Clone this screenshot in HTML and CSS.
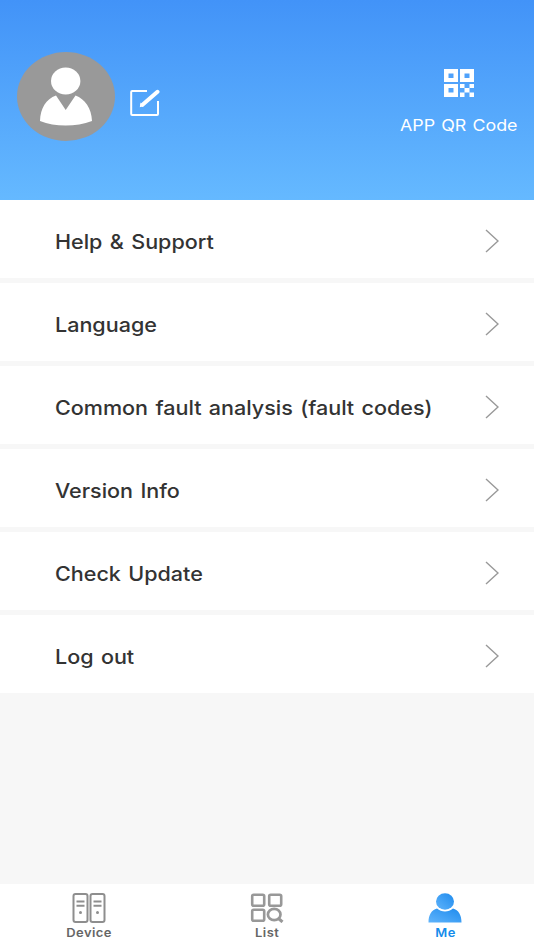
FILE: index.html
```html
<!DOCTYPE html>
<html lang="en">
<head>
    <meta charset="UTF-8">
    <meta name="viewport" content="width=device-width, initial-scale=1.0">
    <title>Me</title>
    <link rel="stylesheet" href="styles.css">
</head>
<body>
    <div class="header">
        <div class="profile">
            <svg class="avatar" viewBox="0 0 98 89">
                <ellipse cx="49" cy="44.5" rx="49" ry="44.5" fill="#999"/>
                <ellipse cx="48.7" cy="29" rx="14.7" ry="13.6" fill="#fff"/>
                <path d="M39 43.500L48.700 58L58.500 43.500C68 47 74.500 56 75 69C59 75 38 75 23 69C23.500 56 29 47 39 43.500Z" fill="#fff"/>
            </svg>
            <svg class="edit-icon" viewBox="0 0 30 28" fill="none" stroke="#fff">
                <path d="M17 2H2.200Q1.200 2 1.200 3V25Q1.200 26 2.200 26H27Q28 26 28 25V12" stroke-width="2"/>
                <path d="M27.500 2.800L12.500 15.800" stroke-width="4" stroke-linecap="round"/>
                <path d="M10.500 13.500L14 17L9.800 18.200Z" fill="#fff" stroke="none"/>
            </svg>
        </div>
        <div class="qr-code">
            <svg class="qr-icon" viewBox="0 0 30 28">
                <path fill="#fff" fill-rule="evenodd" d="M0 0H14V13H0ZM4.500 4.500V9H9.500V4.500ZM16 0H30V13H16ZM20.500 4.500V9H25.500V4.500ZM0 15H14V28H0ZM4.500 19V23.500H9.500V19Z"/>
                <path fill="#fff" d="M16 15H20.500V19H25.500V15H30V19H25.500V23.500H30V28H25.500V23.500H20.500V28H16V23.500H20.500V19H16Z"/>
            </svg>
            <div class="qr-label">APP QR Code</div>
        </div>
    </div>

    <div class="menu">
        <div class="menu-item"><span>Help &amp; Support</span><svg class="arrow" viewBox="0 0 14 24"><path d="M1 1L13 12L1 23"/></svg></div>
        <div class="menu-item"><span>Language</span><svg class="arrow" viewBox="0 0 14 24"><path d="M1 1L13 12L1 23"/></svg></div>
        <div class="menu-item"><span>Common fault analysis (fault codes)</span><svg class="arrow" viewBox="0 0 14 24"><path d="M1 1L13 12L1 23"/></svg></div>
        <div class="menu-item"><span>Version Info</span><svg class="arrow" viewBox="0 0 14 24"><path d="M1 1L13 12L1 23"/></svg></div>
        <div class="menu-item"><span>Check Update</span><svg class="arrow" viewBox="0 0 14 24"><path d="M1 1L13 12L1 23"/></svg></div>
        <div class="menu-item"><span>Log out</span><svg class="arrow" viewBox="0 0 14 24"><path d="M1 1L13 12L1 23"/></svg></div>
    </div>

    <div class="tab-bar">
        <div class="tab">
            <svg class="tab-icon" viewBox="0 0 34 30" fill="none" stroke="#8e8e8e" stroke-width="2">
                <rect x="1.500" y="1" width="14" height="28" rx="2"/>
                <rect x="18.500" y="1" width="14" height="28" rx="2"/>
                <path d="M4.500 8.500H12.500M4.500 12.800H12.500M21.500 8.500H29.500M21.500 12.800H29.500"/>
                <circle cx="8.500" cy="19.500" r="1.500" fill="#8e8e8e" stroke="none"/>
                <circle cx="25.500" cy="19.500" r="1.500" fill="#8e8e8e" stroke="none"/>
            </svg>
            <span>Device</span>
        </div>
        <div class="tab">
            <svg class="tab-icon" viewBox="0 0 34 30" fill="none" stroke="#989898" stroke-width="2.600">
                <rect x="2.200" y="1.700" width="12" height="11" rx="1.500"/>
                <rect x="19.200" y="1.700" width="12" height="11" rx="1.500"/>
                <rect x="2.200" y="16.700" width="12" height="11" rx="1.500"/>
                <ellipse cx="24.200" cy="21.500" rx="6.300" ry="5.700" stroke-width="2.700"/>
                <path d="M28.500 25.500L32.500 29" stroke-width="3"/>
            </svg>
            <span>List</span>
        </div>
        <div class="tab active">
            <svg class="tab-icon" viewBox="0 0 34 30">
                <defs>
                    <linearGradient id="meFill" x1="0" y1="1" x2="1" y2="0">
                        <stop offset="0" stop-color="#60b4fb"/>
                        <stop offset="1" stop-color="#1e8bee"/>
                    </linearGradient>
                </defs>
                <path fill="url(#meFill)" d="M.500 29.500C.500 22 3.500 17 9 15.500C13.500 19.500 20.500 19.500 25 15.500C30.500 17 33.500 22 33.500 29.500Z"/>
                <ellipse cx="17" cy="8.500" rx="9" ry="8.300" fill="url(#meFill)"/>
            </svg>
            <span>Me</span>
        </div>
    </div>
</body>
</html>
```
FILE: styles.css
```css
* {
    box-sizing: border-box;
}

body {
    font-family: Inter, "Liberation Sans", sans-serif;
    margin: 0;
    height: 100vh;
    display: flex;
    flex-direction: column;
    background-color: #f7f7f7;
    color: #333;
}

.header {
    display: flex;
    justify-content: space-between;
    align-items: flex-start;
    height: 200px;
    padding: 52px 17px 0;
    background: linear-gradient(#4293f8, #65b9ff);
}

.profile {
    display: flex;
    gap: 15px;
}

.avatar {
    width: 98px;
    height: 89px;
}

.edit-icon {
    width: 30px;
    height: 28px;
    margin-top: 37px;
}

.qr-code {
    display: flex;
    flex-direction: column;
    align-items: center;
    width: 117px;
    margin-top: 17px;
    color: #fff;
}

.qr-icon {
    width: 30px;
    height: 28px;
}

.qr-label {
    margin-top: 18px;
    font-size: 16px;
    line-height: 20px;
    word-spacing: 1px;
    white-space: nowrap;
    transform: scaleX(1.115);
}

.menu {
    display: flex;
    flex-direction: column;
    gap: 5px;
}

.menu-item {
    display: flex;
    justify-content: space-between;
    align-items: center;
    height: 78px;
    padding: 4px 35px 0 55px;
    background-color: #fff;
    font-size: 20px;
    font-weight: 500;
    word-spacing: 1.5px;
}

/* wide lettering */
.menu-item span {
    padding-top: 1px;
    transform: scaleX(1.077);
    transform-origin: left center;
}

.arrow {
    width: 14px;
    height: 24px;
    fill: none;
    stroke: #999;
    stroke-width: 1.4;
}

.tab-bar {
    display: flex;
    height: 66px;
    margin-top: auto;
    padding-top: 9px;
    background-color: #fff;
}

.tab {
    flex: 1;
    display: flex;
    flex-direction: column;
    align-items: center;
    font-size: 12px;
    font-weight: 600;
    line-height: 20px;
    letter-spacing: 0.4px;
    color: #666;
}

.tab span {
    transform: scaleX(1.08);
}

.tab-icon {
    width: 34px;
    height: 30px;
}

.tab.active {
    color: #148ceb;
}
```
